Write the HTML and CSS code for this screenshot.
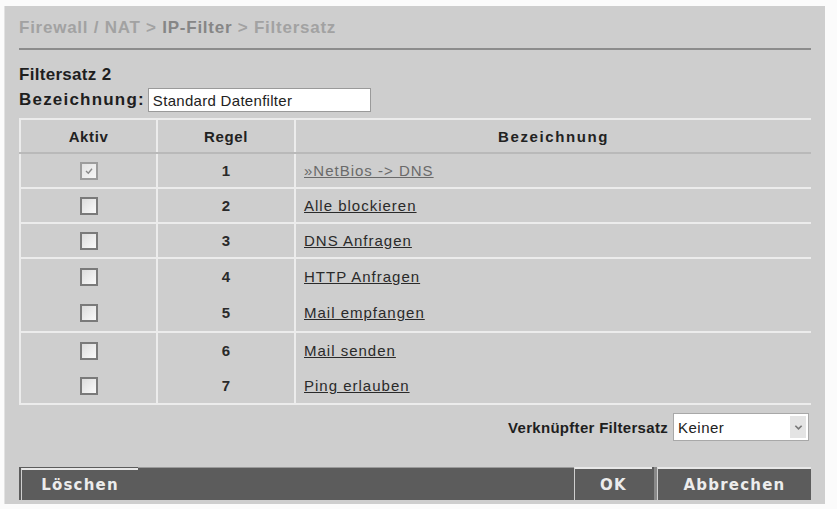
FILE: index.html
```html
<!DOCTYPE html>
<html lang="de">
<head>
  <meta charset="UTF-8" />
  <title>Filtersatz</title>
  <link rel="stylesheet" href="styles.css">
</head>
<body>
  <div class="panel">
    <div class="crumbs">Firewall / NAT &gt; <span class="here">IP-Filter</span> &gt; Filtersatz</div>
    <div class="rule"></div>

    <div class="title">Filtersatz 2</div>
    <div class="name-row">
      <label for="name">Bezeichnung:</label>
      <input type="text" id="name" value="Standard Datenfilter">
    </div>

    <table class="filters">
      <colgroup>
        <col class="col-aktiv">
        <col class="col-regel">
        <col>
      </colgroup>
      <thead>
        <tr>
          <th>Aktiv</th>
          <th>Regel</th>
          <th class="wide">Bezeichnung</th>
        </tr>
      </thead>
      <tbody>
        <tr>
          <td><span class="cb checked"><svg viewBox="0 0 10 10" width="10" height="10"><path d="M2 5 L4.3 7.2 L8 2.8" fill="none" stroke="#8a8a8a" stroke-width="1.4"/></svg></span></td>
          <td class="num">1</td>
          <td><a href="#" class="visited">»NetBios -&gt; DNS</a></td>
        </tr>
        <tr class="sep">
          <td><span class="cb"></span></td>
          <td class="num">2</td>
          <td><a href="#">Alle blockieren</a></td>
        </tr>
        <tr class="sep">
          <td><span class="cb"></span></td>
          <td class="num">3</td>
          <td><a href="#">DNS Anfragen</a></td>
        </tr>
        <tr class="sep tall">
          <td><span class="cb"></span></td>
          <td class="num">4</td>
          <td><a href="#">HTTP Anfragen</a></td>
        </tr>
        <tr class="taller">
          <td><span class="cb"></span></td>
          <td class="num">5</td>
          <td><a href="#">Mail empfangen</a></td>
        </tr>
        <tr class="sep tall">
          <td><span class="cb"></span></td>
          <td class="num">6</td>
          <td><a href="#">Mail senden</a></td>
        </tr>
        <tr class="tall">
          <td><span class="cb"></span></td>
          <td class="num">7</td>
          <td><a href="#">Ping erlauben</a></td>
        </tr>
      </tbody>
    </table>

    <div class="link-row">
      <span class="link-label">Verknüpfter Filtersatz</span>
      <div class="select">
        <span class="select-value">Keiner</span>
        <span class="select-btn"><svg viewBox="0 0 10 10" width="9" height="9"><path d="M1.5 3 L5 6.5 L8.5 3" fill="none" stroke="#777" stroke-width="1.8"/></svg></span>
      </div>
    </div>

    <div class="btn-bar">
      <button class="btn btn-delete">Löschen</button>
      <div class="bar-fill"></div>
      <button class="btn btn-ok">OK</button>
      <button class="btn btn-cancel">Abbrechen</button>
    </div>
  </div>
</body>
</html>
```

FILE: styles.css
```css
html, body {
  margin: 0;
  padding: 0;
  background: #fbfbfb;
  overflow: hidden;
}
body {
  font-family: "Liberation Sans", Arial, sans-serif;
  color: #222;
}
.panel {
  margin: 6px 0 0 4px;
  width: 806px;
  height: 498px;
  padding: 0 0 0 14px;
  background: #cecece;
  border-left: 1px solid #e2e2e2;
}
.crumbs {
  padding-top: 12px;
  height: 21px;
  font-size: 17px;
  font-weight: bold;
  color: #a2a2a2;
  letter-spacing: 0.75px;
}
.crumbs .here {
  color: #868686;
}
.rule {
  margin-top: 9px;
  width: 792px;
  height: 2px;
  background: #8c8c8c;
}
.title {
  margin-top: 15px;
  font-size: 17px;
  font-weight: bold;
  letter-spacing: 0.3px;
  color: #1e1e1e;
}
.name-row {
  display: flex;
  align-items: center;
  gap: 3px;
  margin-top: 3px;
}
.name-row label {
  font-size: 17px;
  font-weight: bold;
  letter-spacing: 1.2px;
  color: #1e1e1e;
}
.name-row input {
  width: 213px;
  height: 22px;
  padding: 0 4px;
  border: 1px solid #9a9a9a;
  font-family: "Liberation Sans", Arial, sans-serif;
  font-size: 15px;
  letter-spacing: 0.3px;
  color: #222;
  background: #fff;
  box-sizing: content-box;
}
.filters {
  margin-top: 6px;
  width: 792px;
  table-layout: fixed;
  border-collapse: collapse;
  border-top: 2px solid #ececec;
  border-left: 2px solid #ececec;
  border-bottom: 2px solid #ececec;
}
.col-aktiv { width: 137px; }
.col-regel { width: 138px; }
.filters th {
  height: 32px;
  padding: 0;
  font-size: 15px;
  font-weight: bold;
  color: #222;
  letter-spacing: 0.6px;
  border-bottom: 2px solid #b9b9b9;
}
.filters th.wide {
  letter-spacing: 1.6px;
}
.filters th + th,
.filters td + td {
  border-left: 2px solid #ececec;
}
.filters td {
  height: 33px;
  padding: 0;
  text-align: center;
}
.filters tr.tall td {
  height: 35px;
}
.filters tr.taller td {
  height: 37px;
}
.filters td:last-child {
  text-align: left;
  padding-left: 8px;
}
.filters tr.sep td {
  border-top: 2px solid #ececec;
}
.num {
  font-size: 15px;
  font-weight: bold;
  color: #2a2a2a;
}
.cb {
  display: inline-flex;
  align-items: center;
  justify-content: center;
  vertical-align: middle;
  width: 14px;
  height: 14px;
  border: 2px solid #7a7a7a;
  background: linear-gradient(135deg, #dcdcdc, #fafafa);
}
.cb.checked {
  border-color: #9c9c9c;
  background: linear-gradient(135deg, #e2e2e2, #f6f6f6);
}
.filters a {
  font-size: 15px;
  color: #2a2a2a;
  letter-spacing: 1px;
  text-decoration: underline;
}
.filters a.visited {
  color: #6a6a6a;
}
.link-row {
  display: flex;
  justify-content: flex-end;
  align-items: center;
  gap: 5px;
  width: 790px;
  margin-top: 8px;
}
.link-label {
  font-size: 15px;
  font-weight: bold;
  letter-spacing: 0.3px;
  color: #1e1e1e;
}
.select {
  display: flex;
  align-items: center;
  width: 134px;
  height: 26px;
  border: 1px solid #a8a8a8;
  background: #fff;
}
.select-value {
  flex: 1;
  padding-left: 4px;
  font-size: 15px;
  letter-spacing: 0.5px;
  color: #222;
}
.select-btn {
  display: flex;
  align-items: center;
  justify-content: center;
  width: 16px;
  height: 22px;
  margin-right: 2px;
  background: #e4e4e4;
}
.btn-bar {
  display: flex;
  width: 792px;
  height: 33px;
  margin-top: 26px;
  background: #5c5c5c;
}
.bar-fill {
  flex: 1;
  border-top: 1px solid #9a9a9a;
}
.btn {
  height: 33px;
  padding: 0;
  border: none;
  border-top: 2px solid #e8e8e8;
  border-left: 1px solid #cfcfcf;
  background: #5c5c5c;
  color: #ececec;
  font-family: "DejaVu Sans", Verdana, sans-serif;
  font-size: 15px;
  font-weight: bold;
  letter-spacing: 1.2px;
}
.btn-delete {
  width: 117px;
  margin-left: 2px;
  margin-top: 1px;
  height: 32px;
}
.btn-ok {
  width: 78px;
}
.btn-cancel {
  width: 154px;
  margin-left: 5px;
  box-shadow: -3px 0 0 #8a8a8a;
}
```
